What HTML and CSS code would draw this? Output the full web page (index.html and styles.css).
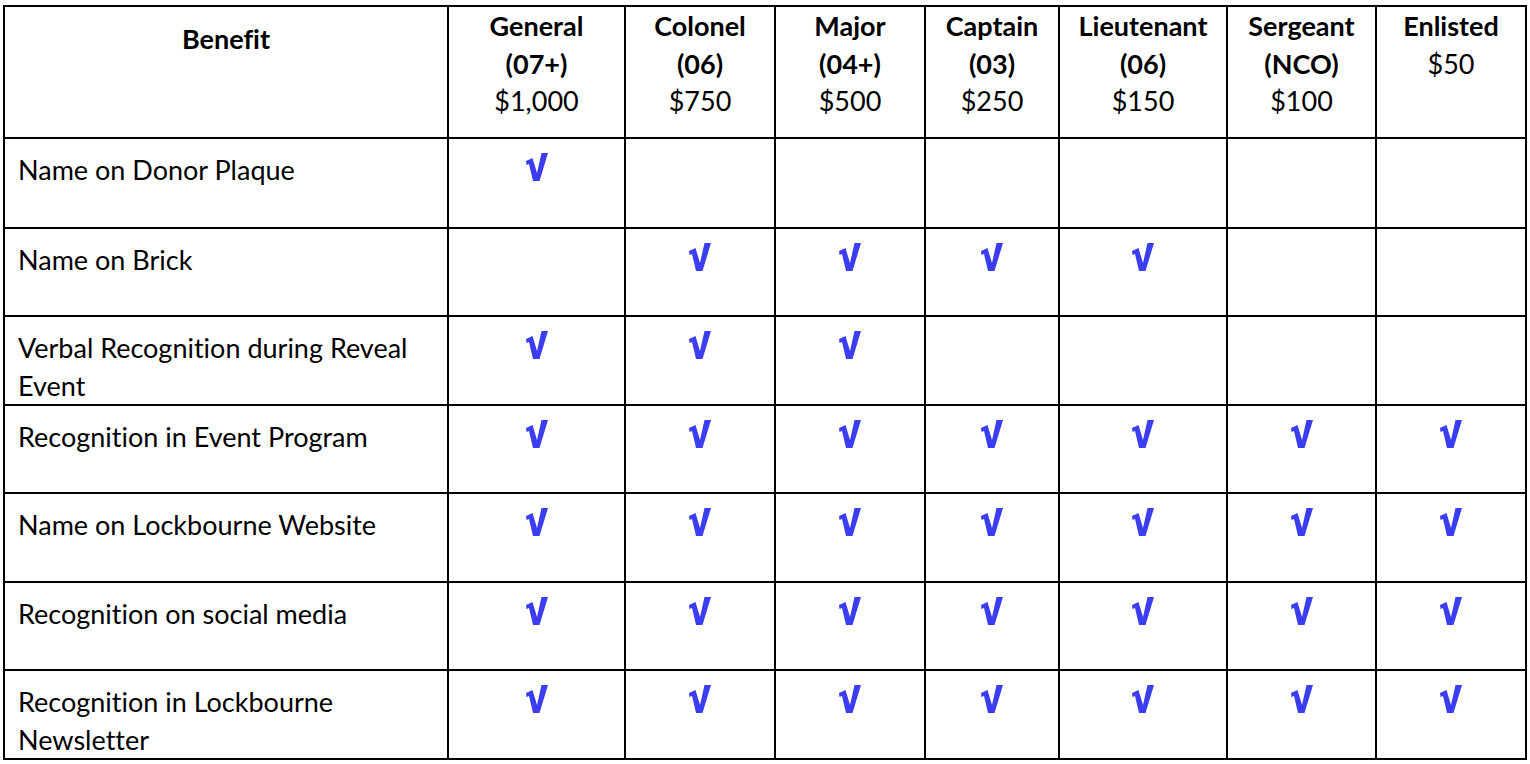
FILE: index.html
```html
<!DOCTYPE html>
<html lang="en">
<head>
<meta charset="utf-8">
<title>Donor Benefits</title>
<link rel="stylesheet" href="styles.css">
</head>
<body>
<table class="tiers">
  <thead>
    <tr class="head">
      <th class="c-benefit benefit-head">Benefit</th>
      <th class="c1"><span class="rank">General<br>(07+)</span><br>$1,000</th>
      <th class="c2"><span class="rank">Colonel<br>(06)</span><br>$750</th>
      <th class="c3"><span class="rank">Major<br>(04+)</span><br>$500</th>
      <th class="c4"><span class="rank">Captain<br>(03)</span><br>$250</th>
      <th class="c5"><span class="rank">Lieutenant<br>(06)</span><br>$150</th>
      <th class="c6"><span class="rank">Sergeant<br>(NCO)</span><br>$100</th>
      <th class="c7"><span class="rank">Enlisted</span><br>$50</th>
    </tr>
  </thead>
  <tbody>
    <tr>
      <td class="label">Name on Donor Plaque</td>
      <td class="mark"><svg class="check" viewBox="0 0 22 28" width="22" height="28" aria-label="yes"><polygon points="0,8 6.5,5 11,20 15.5,0 22,0 13.5,28 7,28 3,11 0.5,12"/></svg></td>
      <td class="mark"></td>
      <td class="mark"></td>
      <td class="mark"></td>
      <td class="mark"></td>
      <td class="mark"></td>
      <td class="mark"></td>
    </tr>
    <tr>
      <td class="label">Name on Brick</td>
      <td class="mark"></td>
      <td class="mark"><svg class="check" viewBox="0 0 22 28" width="22" height="28" aria-label="yes"><polygon points="0,8 6.5,5 11,20 15.5,0 22,0 13.5,28 7,28 3,11 0.5,12"/></svg></td>
      <td class="mark"><svg class="check" viewBox="0 0 22 28" width="22" height="28" aria-label="yes"><polygon points="0,8 6.5,5 11,20 15.5,0 22,0 13.5,28 7,28 3,11 0.5,12"/></svg></td>
      <td class="mark"><svg class="check" viewBox="0 0 22 28" width="22" height="28" aria-label="yes"><polygon points="0,8 6.5,5 11,20 15.5,0 22,0 13.5,28 7,28 3,11 0.5,12"/></svg></td>
      <td class="mark"><svg class="check" viewBox="0 0 22 28" width="22" height="28" aria-label="yes"><polygon points="0,8 6.5,5 11,20 15.5,0 22,0 13.5,28 7,28 3,11 0.5,12"/></svg></td>
      <td class="mark"></td>
      <td class="mark"></td>
    </tr>
    <tr>
      <td class="label">Verbal Recognition during Reveal Event</td>
      <td class="mark"><svg class="check" viewBox="0 0 22 28" width="22" height="28" aria-label="yes"><polygon points="0,8 6.5,5 11,20 15.5,0 22,0 13.5,28 7,28 3,11 0.5,12"/></svg></td>
      <td class="mark"><svg class="check" viewBox="0 0 22 28" width="22" height="28" aria-label="yes"><polygon points="0,8 6.5,5 11,20 15.5,0 22,0 13.5,28 7,28 3,11 0.5,12"/></svg></td>
      <td class="mark"><svg class="check" viewBox="0 0 22 28" width="22" height="28" aria-label="yes"><polygon points="0,8 6.5,5 11,20 15.5,0 22,0 13.5,28 7,28 3,11 0.5,12"/></svg></td>
      <td class="mark"></td>
      <td class="mark"></td>
      <td class="mark"></td>
      <td class="mark"></td>
    </tr>
    <tr>
      <td class="label">Recognition in Event Program</td>
      <td class="mark"><svg class="check" viewBox="0 0 22 28" width="22" height="28" aria-label="yes"><polygon points="0,8 6.5,5 11,20 15.5,0 22,0 13.5,28 7,28 3,11 0.5,12"/></svg></td>
      <td class="mark"><svg class="check" viewBox="0 0 22 28" width="22" height="28" aria-label="yes"><polygon points="0,8 6.5,5 11,20 15.5,0 22,0 13.5,28 7,28 3,11 0.5,12"/></svg></td>
      <td class="mark"><svg class="check" viewBox="0 0 22 28" width="22" height="28" aria-label="yes"><polygon points="0,8 6.5,5 11,20 15.5,0 22,0 13.5,28 7,28 3,11 0.5,12"/></svg></td>
      <td class="mark"><svg class="check" viewBox="0 0 22 28" width="22" height="28" aria-label="yes"><polygon points="0,8 6.5,5 11,20 15.5,0 22,0 13.5,28 7,28 3,11 0.5,12"/></svg></td>
      <td class="mark"><svg class="check" viewBox="0 0 22 28" width="22" height="28" aria-label="yes"><polygon points="0,8 6.5,5 11,20 15.5,0 22,0 13.5,28 7,28 3,11 0.5,12"/></svg></td>
      <td class="mark"><svg class="check" viewBox="0 0 22 28" width="22" height="28" aria-label="yes"><polygon points="0,8 6.5,5 11,20 15.5,0 22,0 13.5,28 7,28 3,11 0.5,12"/></svg></td>
      <td class="mark"><svg class="check" viewBox="0 0 22 28" width="22" height="28" aria-label="yes"><polygon points="0,8 6.5,5 11,20 15.5,0 22,0 13.5,28 7,28 3,11 0.5,12"/></svg></td>
    </tr>
    <tr>
      <td class="label">Name on Lockbourne Website</td>
      <td class="mark"><svg class="check" viewBox="0 0 22 28" width="22" height="28" aria-label="yes"><polygon points="0,8 6.5,5 11,20 15.5,0 22,0 13.5,28 7,28 3,11 0.5,12"/></svg></td>
      <td class="mark"><svg class="check" viewBox="0 0 22 28" width="22" height="28" aria-label="yes"><polygon points="0,8 6.5,5 11,20 15.5,0 22,0 13.5,28 7,28 3,11 0.5,12"/></svg></td>
      <td class="mark"><svg class="check" viewBox="0 0 22 28" width="22" height="28" aria-label="yes"><polygon points="0,8 6.5,5 11,20 15.5,0 22,0 13.5,28 7,28 3,11 0.5,12"/></svg></td>
      <td class="mark"><svg class="check" viewBox="0 0 22 28" width="22" height="28" aria-label="yes"><polygon points="0,8 6.5,5 11,20 15.5,0 22,0 13.5,28 7,28 3,11 0.5,12"/></svg></td>
      <td class="mark"><svg class="check" viewBox="0 0 22 28" width="22" height="28" aria-label="yes"><polygon points="0,8 6.5,5 11,20 15.5,0 22,0 13.5,28 7,28 3,11 0.5,12"/></svg></td>
      <td class="mark"><svg class="check" viewBox="0 0 22 28" width="22" height="28" aria-label="yes"><polygon points="0,8 6.5,5 11,20 15.5,0 22,0 13.5,28 7,28 3,11 0.5,12"/></svg></td>
      <td class="mark"><svg class="check" viewBox="0 0 22 28" width="22" height="28" aria-label="yes"><polygon points="0,8 6.5,5 11,20 15.5,0 22,0 13.5,28 7,28 3,11 0.5,12"/></svg></td>
    </tr>
    <tr>
      <td class="label">Recognition on social media</td>
      <td class="mark"><svg class="check" viewBox="0 0 22 28" width="22" height="28" aria-label="yes"><polygon points="0,8 6.5,5 11,20 15.5,0 22,0 13.5,28 7,28 3,11 0.5,12"/></svg></td>
      <td class="mark"><svg class="check" viewBox="0 0 22 28" width="22" height="28" aria-label="yes"><polygon points="0,8 6.5,5 11,20 15.5,0 22,0 13.5,28 7,28 3,11 0.5,12"/></svg></td>
      <td class="mark"><svg class="check" viewBox="0 0 22 28" width="22" height="28" aria-label="yes"><polygon points="0,8 6.5,5 11,20 15.5,0 22,0 13.5,28 7,28 3,11 0.5,12"/></svg></td>
      <td class="mark"><svg class="check" viewBox="0 0 22 28" width="22" height="28" aria-label="yes"><polygon points="0,8 6.5,5 11,20 15.5,0 22,0 13.5,28 7,28 3,11 0.5,12"/></svg></td>
      <td class="mark"><svg class="check" viewBox="0 0 22 28" width="22" height="28" aria-label="yes"><polygon points="0,8 6.5,5 11,20 15.5,0 22,0 13.5,28 7,28 3,11 0.5,12"/></svg></td>
      <td class="mark"><svg class="check" viewBox="0 0 22 28" width="22" height="28" aria-label="yes"><polygon points="0,8 6.5,5 11,20 15.5,0 22,0 13.5,28 7,28 3,11 0.5,12"/></svg></td>
      <td class="mark"><svg class="check" viewBox="0 0 22 28" width="22" height="28" aria-label="yes"><polygon points="0,8 6.5,5 11,20 15.5,0 22,0 13.5,28 7,28 3,11 0.5,12"/></svg></td>
    </tr>
    <tr>
      <td class="label">Recognition in Lockbourne Newsletter</td>
      <td class="mark"><svg class="check" viewBox="0 0 22 28" width="22" height="28" aria-label="yes"><polygon points="0,8 6.5,5 11,20 15.5,0 22,0 13.5,28 7,28 3,11 0.5,12"/></svg></td>
      <td class="mark"><svg class="check" viewBox="0 0 22 28" width="22" height="28" aria-label="yes"><polygon points="0,8 6.5,5 11,20 15.5,0 22,0 13.5,28 7,28 3,11 0.5,12"/></svg></td>
      <td class="mark"><svg class="check" viewBox="0 0 22 28" width="22" height="28" aria-label="yes"><polygon points="0,8 6.5,5 11,20 15.5,0 22,0 13.5,28 7,28 3,11 0.5,12"/></svg></td>
      <td class="mark"><svg class="check" viewBox="0 0 22 28" width="22" height="28" aria-label="yes"><polygon points="0,8 6.5,5 11,20 15.5,0 22,0 13.5,28 7,28 3,11 0.5,12"/></svg></td>
      <td class="mark"><svg class="check" viewBox="0 0 22 28" width="22" height="28" aria-label="yes"><polygon points="0,8 6.5,5 11,20 15.5,0 22,0 13.5,28 7,28 3,11 0.5,12"/></svg></td>
      <td class="mark"><svg class="check" viewBox="0 0 22 28" width="22" height="28" aria-label="yes"><polygon points="0,8 6.5,5 11,20 15.5,0 22,0 13.5,28 7,28 3,11 0.5,12"/></svg></td>
      <td class="mark"><svg class="check" viewBox="0 0 22 28" width="22" height="28" aria-label="yes"><polygon points="0,8 6.5,5 11,20 15.5,0 22,0 13.5,28 7,28 3,11 0.5,12"/></svg></td>
    </tr>
  </tbody>
</table>
</body>
</html>
```

FILE: styles.css
```css
html, body {
  margin: 0;
  padding: 0;
  background: #ffffff;
}

body {
  font-family: Lato, "Open Sans", "Liberation Sans", sans-serif;
  font-size: 27px;
  line-height: 37.5px;
  color: #000000;
  font-variant-ligatures: none;
  font-feature-settings: "liga" 0, "clig" 0, "dlig" 0;
}

.tiers {
  margin: 5px 0 0 3px;
  width: 1524px;
  table-layout: fixed;
  border-collapse: separate;
  border-spacing: 0;
  border-top: 2px solid #000;
  border-left: 2px solid #000;
}

.tiers th,
.tiers td {
  box-sizing: border-box;
  border-right: 2px solid #000;
  border-bottom: 2px solid #000;
  vertical-align: top;
  padding: 0;
}

.tiers th {
  font-weight: 400;
  text-align: center;
}

.c-benefit { width: 444px; }
.c1 { width: 177px; }
.c2 { width: 150px; }
.c3 { width: 150px; }
.c4 { width: 134px; }
.c5 { width: 168px; }
.c6 { width: 149px; }
.c7 { width: 150px; }

.rank {
  font-weight: 700;
}

.tiers th.benefit-head {
  font-weight: 700;
  padding-top: 13px;
}

.head { height: 132px; }

tbody tr { height: 89px; }
tbody tr:nth-child(1) { height: 90px; }
tbody tr:nth-child(2) { height: 88px; }
tbody tr:nth-child(4) { height: 88px; }
tbody tr:nth-child(6) { height: 88px; }

.tiers td.label {
  padding: 12px 13px 0 13px;
  text-align: left;
}

.tiers td.mark {
  padding-top: 12px;
  text-align: center;
}

.check {
  display: inline-block;
  vertical-align: -1px;
  fill: #3b3df2;
}
```
